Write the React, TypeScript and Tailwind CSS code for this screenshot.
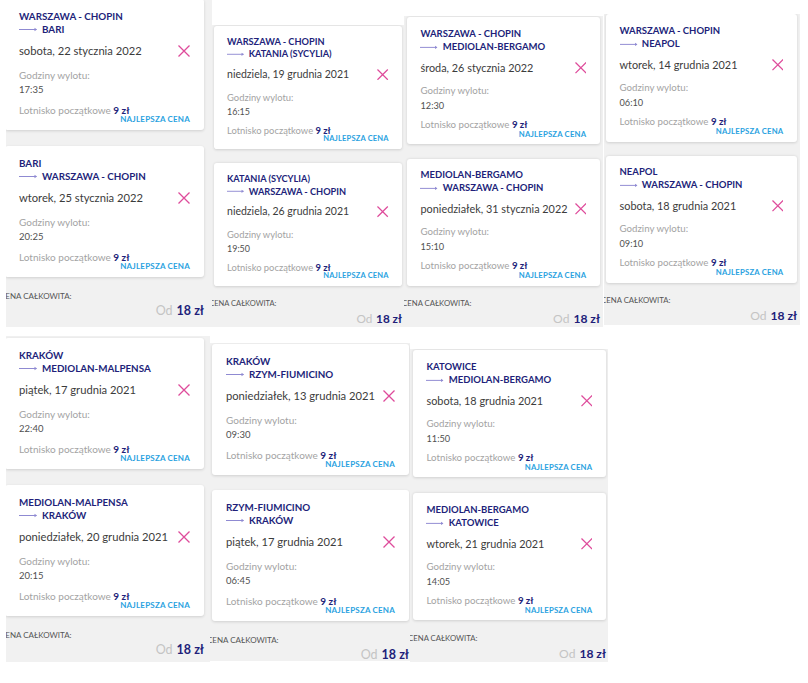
import React from 'react';

type Leg = { from: string; to: string; date: string; time: string };

type Panel = {
  outer: string;
  inner: string;
  gap: string;
  legs: Leg[];
  caret?: boolean;
};

const WAW = 'WARSZAWA - CHOPIN';

const topRow: Panel[] = [
  {
    outer: 'ml-[6px] mt-0 w-[206px] h-[327px]',
    inner: 'ml-[-1px] mt-[-1px] w-[199px]',
    gap: 'gap-[16px]',
    legs: [
      { from: WAW, to: 'BARI', date: 'sobota, 22 stycznia 2022', time: '17:35' },
      { from: 'BARI', to: WAW, date: 'wtorek, 25 stycznia 2022', time: '20:25' },
    ],
  },
  {
    outer: 'mt-[25px] w-[192px] h-[302px]',
    inner: '[zoom:0.94] ml-[2px] mt-[1px] w-[200px]',
    gap: 'gap-[15px]',
    legs: [
      { from: WAW, to: 'KATANIA (SYCYLIA)', date: 'niedziela, 19 grudnia 2021', time: '16:15' },
      { from: 'KATANIA (SYCYLIA)', to: WAW, date: 'niedziela, 26 grudnia 2021', time: '19:50' },
    ],
  },
  {
    outer: 'mt-[16px] w-[199px] h-[311px]',
    inner: '[zoom:0.97] ml-[3px] mt-[1.5px] w-[199px]',
    gap: 'gap-[14.5px]',
    legs: [
      { from: WAW, to: 'MEDIOLAN-BERGAMO', date: 'środa, 26 stycznia 2022', time: '12:30' },
      { from: 'MEDIOLAN-BERGAMO', to: WAW, date: 'poniedziałek, 31 stycznia 2022', time: '15:10' },
    ],
  },
  {
    outer: 'ml-[1px] mt-[14px] w-[196px] h-[311px]',
    inner: '[zoom:0.97] ml-[2px] mt-[0.5px] w-[197px]',
    gap: 'gap-[14.5px]',
    legs: [
      { from: WAW, to: 'NEAPOL', date: 'wtorek, 14 grudnia 2021', time: '06:10' },
      { from: 'NEAPOL', to: WAW, date: 'sobota, 18 grudnia 2021', time: '09:10' },
    ],
  },
];

const bottomRow: Panel[] = [
  {
    outer: 'ml-[6px] mt-0 w-[204px] h-[326px]',
    inner: 'ml-[-1px] mt-[2px] w-[199px]',
    gap: 'gap-[16px]',
    legs: [
      { from: 'KRAKÓW', to: 'MEDIOLAN-MALPENSA', date: 'piątek, 17 grudnia 2021', time: '22:40' },
      { from: 'MEDIOLAN-MALPENSA', to: 'KRAKÓW', date: 'poniedziałek, 20 grudnia 2021', time: '20:15' },
    ],
  },
  {
    outer: 'mt-[7px] w-[200px] h-[318px]',
    inner: 'ml-[2px] mt-[1px] w-[197px]',
    gap: 'gap-[15px]',
    legs: [
      { from: 'KRAKÓW', to: 'RZYM-FIUMICINO', date: 'poniedziałek, 13 grudnia 2021', time: '09:30' },
      { from: 'RZYM-FIUMICINO', to: 'KRAKÓW', date: 'piątek, 17 grudnia 2021', time: '06:45' },
    ],
  },
  {
    outer: 'mt-[13px] w-[198px] h-[313px]',
    inner: '[zoom:0.97] ml-[3px] mt-[1.5px] w-[199px]',
    gap: 'gap-[16.5px]',
    caret: true,
    legs: [
      { from: 'KATOWICE', to: 'MEDIOLAN-BERGAMO', date: 'sobota, 18 grudnia 2021', time: '11:50' },
      { from: 'MEDIOLAN-BERGAMO', to: 'KATOWICE', date: 'wtorek, 21 grudnia 2021', time: '14:05' },
    ],
  },
];

const Arrow = () => (
  <svg width="19" height="7" viewBox="0 0 19 7" className="shrink-0">
    <path d="M0 3.5H17.5" stroke="#8f8ad2" strokeWidth="1" />
    <path d="M15.5 1.8L18 3.5L15.5 5.2Z" fill="#8f8ad2" />
  </svg>
);

const Cross = () => (
  <svg width="12" height="12" viewBox="0 0 12 12" className="shrink-0">
    <path d="M0.5 0.5L11.5 11.5M11.5 0.5L0.5 11.5" stroke="#de4b9b" strokeWidth="1.3" />
  </svg>
);

function Card({ leg }: { leg: Leg }) {
  return (
    <div className="rounded-[3px] bg-white pl-[14px] pr-[14px] pt-[11px] pb-[6px] shadow-[0_1px_3px_rgba(0,0,0,0.14)]">
      <div className="text-[9.8px] font-bold leading-[13px] text-[#221f7a]">{leg.from}</div>
      <div className="flex items-center gap-[4px] text-[9.8px] font-bold leading-[13px] text-[#221f7a]">
        <Arrow />
        <span>{leg.to}</span>
      </div>
      <div className="mt-[6px] flex h-[18px] items-center justify-between">
        <span className="whitespace-nowrap text-[11.2px] text-[#3c3c3c]">{leg.date}</span>
        <Cross />
      </div>
      <div className="mt-[8px] text-[10px] leading-[14px] text-[#a3a3a3]">Godziny wylotu:</div>
      <div className="mt-[1px] text-[9.5px] leading-[14px] text-[#505050]">{leg.time}</div>
      <div className="mt-[6px] text-[10px] leading-[14px] text-[#a3a3a3]">
        Lotnisko początkowe <span className="font-bold text-[#221f7a]">9 zł</span>
      </div>
      <div className="mt-[-2px] text-right text-[8px] font-bold leading-[9px] tracking-[0.2px] text-[#2aa2df]">
        NAJLEPSZA CENA
      </div>
    </div>
  );
}

function PricePanel({ panel }: { panel: Panel }) {
  return (
    <div className={`shrink-0 overflow-hidden bg-[#f1f1f1] ${panel.outer}`}>
      <div className={panel.inner}>
        <div className={`flex flex-col ${panel.gap}`}>
          {panel.legs.map((leg, i) => (
            <Card key={i} leg={leg} />
          ))}
        </div>
        <div className="ml-[-5px] mt-[14px] whitespace-nowrap text-[8px] leading-[10px] text-[#555]">
          CENA CAŁKOWITA:
        </div>
        <div className="mt-[2px] flex items-center justify-end text-[12.5px] leading-[16px]">
          <span className="text-[#c4c4c4]">Od</span>
          <span className="ml-[4px] font-bold text-[#221f7a]">18 zł</span>
          {panel.caret && <span className="mr-[-3px] ml-[2px] h-[15px] w-px bg-black" />}
        </div>
      </div>
    </div>
  );
}

export default function App() {
  return (
    <div className="h-[683px] w-[808px] bg-white font-['Lato','Liberation_Sans',sans-serif]">
      <div className="flex items-start">
        {topRow.map((p, i) => (
          <PricePanel key={i} panel={p} />
        ))}
      </div>
      <div className="mt-[9px] flex items-start">
        {bottomRow.map((p, i) => (
          <PricePanel key={i} panel={p} />
        ))}
      </div>
    </div>
  );
}
